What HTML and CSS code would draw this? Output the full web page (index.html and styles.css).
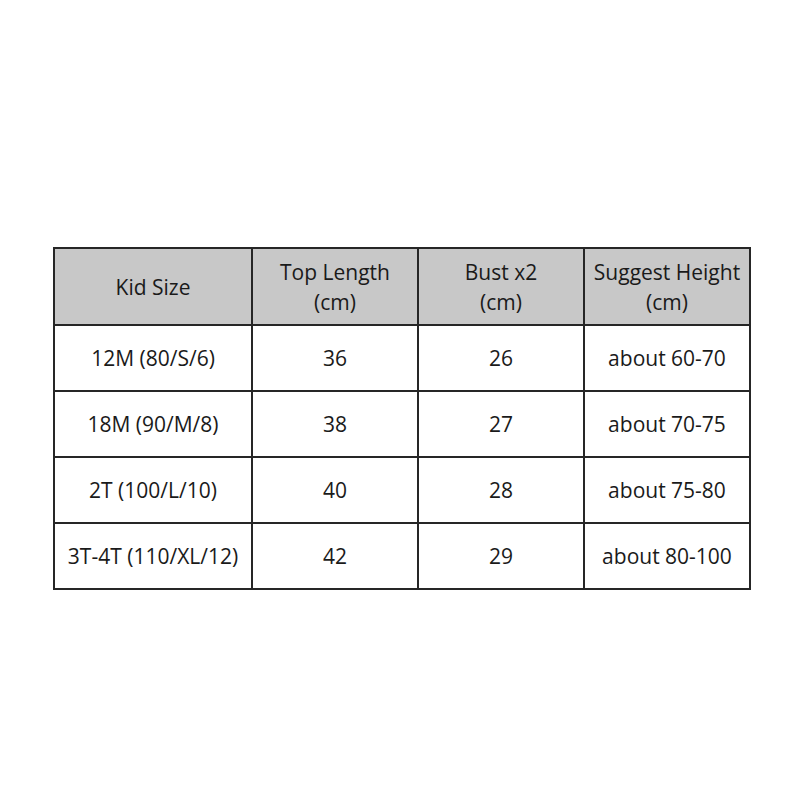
FILE: index.html
```html
<!DOCTYPE html>
<html>
<head>
<meta charset="utf-8">
<link rel="stylesheet" href="styles.css">
</head>
<body>
<div class="page">
  <table class="size-table">
    <colgroup>
      <col class="c1"><col class="c2"><col class="c3"><col class="c4">
    </colgroup>
    <thead>
      <tr>
        <th>Kid Size</th>
        <th>Top Length<br>(cm)</th>
        <th>Bust x2<br>(cm)</th>
        <th>Suggest Height<br>(cm)</th>
      </tr>
    </thead>
    <tbody>
      <tr><td>12M (80/S/6)</td><td>36</td><td>26</td><td>about 60-70</td></tr>
      <tr><td>18M (90/M/8)</td><td>38</td><td>27</td><td>about 70-75</td></tr>
      <tr><td>2T (100/L/10)</td><td>40</td><td>28</td><td>about 75-80</td></tr>
      <tr><td>3T-4T (110/XL/12)</td><td>42</td><td>29</td><td>about 80-100</td></tr>
    </tbody>
  </table>
</div>
</body>
</html>
```
FILE: styles.css
```css
html, body {
  margin: 0;
  padding: 0;
  background: #ffffff;
}
.page {
  width: 800px;
  height: 800px;
  padding: 247px 0 0 53px;
  box-sizing: border-box;
}
.size-table {
  border-collapse: collapse;
  table-layout: fixed;
  width: 696px;
  font-family: "Open Sans", "Noto Sans", sans-serif;
  font-size: 21px;
  color: #1a1a1a;
}
.c1 { width: 198px; }
.c2 { width: 166px; }
.c3 { width: 166px; }
.c4 { width: 166px; }
.size-table th,
.size-table td {
  border: 2px solid #262626;
  text-align: center;
  vertical-align: middle;
  padding: 0;
  font-weight: normal;
}
.size-table th {
  background: #c8c8c8;
  height: 75px;
  line-height: 30px;
}
.size-table td {
  height: 64px;
  line-height: 26px;
}
```
